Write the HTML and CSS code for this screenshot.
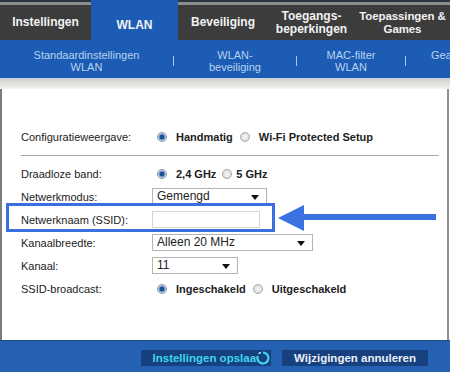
FILE: index.html
```html
<!DOCTYPE html>
<html lang="nl">
<head>
    <meta charset="UTF-8">
    <meta name="viewport" content="width=device-width, initial-scale=1.0">
    <title>WLAN - Standaardinstellingen</title>
    <link rel="stylesheet" href="styles.css">
</head>
<body>

    <div class="tabs">
        <div class="tab w1">Instellingen</div>
        <div class="tab active w2">WLAN</div>
        <div class="tab w3">Beveiliging</div>
        <div class="tab w4">Toegangs-<br>beperkingen</div>
        <div class="tab w5">Toepassingen &amp;<br>Games</div>
    </div>

    <div class="subnav">
        <div class="sub s1">Standaardinstellingen<br>WLAN</div>
        <span class="sep"></span>
        <div class="sub s2">WLAN-<br>beveiliging</div>
        <span class="sep"></span>
        <div class="sub s3">MAC-filter<br>WLAN</div>
        <span class="sep"></span>
        <div class="sub s4">Geavanceerde<br>WLAN</div>
    </div>

    <div class="strip"></div>

    <div class="panel">
        <div class="row">
            <div class="label">Configuratieweergave:</div>
            <div class="ctrl">
                <span class="radio on"></span><b>Handmatig</b>
                <span class="radio gap"></span><b>Wi-Fi Protected Setup</b>
            </div>
        </div>

        <div class="rule"></div>

        <div class="row">
            <div class="label">Draadloze band:</div>
            <div class="ctrl">
                <span class="radio on"></span><b>2,4 GHz</b>
                <span class="radio gap-s"></span><b>5 GHz</b>
            </div>
        </div>
        <div class="row">
            <div class="label">Netwerkmodus:</div>
            <div class="ctrl"><div class="select sel-mode">Gemengd</div></div>
        </div>
        <div class="row ssid">
            <div class="label">Netwerknaam (SSID):</div>
            <div class="ctrl"><div class="input"></div></div>
            <div class="highlight"></div>
        </div>
        <div class="row">
            <div class="label">Kanaalbreedte:</div>
            <div class="ctrl"><div class="select sel-width">Alleen 20 MHz</div></div>
        </div>
        <div class="row">
            <div class="label">Kanaal:</div>
            <div class="ctrl"><div class="select sel-chan">11</div></div>
        </div>
        <div class="row">
            <div class="label">SSID-broadcast:</div>
            <div class="ctrl">
                <span class="radio on"></span><b>Ingeschakeld</b>
                <span class="radio gap"></span><b>Uitgeschakeld</b>
            </div>
        </div>

        <!-- annotation arrow pointing at the SSID field -->
        <svg class="arrow" width="170" height="30" viewBox="0 0 170 30">
            <line x1="22" y1="13" x2="158" y2="13" stroke="#3a72e2" stroke-width="6"/>
            <polygon points="0,14 26,1 26,27" fill="#3a72e2"/>
        </svg>
    </div>

    <div class="footer">
        <div class="btn save">Instellingen opslaa<svg class="spin" width="14" height="14" viewBox="0 0 14 14">
            <path d="M7 1.5 A5.5 5.5 0 1 1 1.8 5" fill="none" stroke="#3fd6f2" stroke-width="2.2"/>
            <path d="M2.5 2.5 A5.5 5.5 0 0 1 5 1.8" fill="none" stroke="#9fe8f8" stroke-width="1.5"/>
        </svg></div>
        <div class="btn">Wijzigingen annuleren</div>
    </div>

</body>
</html>
```

FILE: styles.css
```css
body {
    margin: 0;
    padding: 0;
    width: 450px;
    height: 372px;
    overflow: hidden;
    font-family: 'Liberation Sans', Arial, sans-serif;
    background: #fff;
    color: #222;
}

/* top tabs */
.tabs {
    display: flex;
    height: 40px;
    background: linear-gradient(#2c3440 0 2px, #8d8d8d 2px 5px, #3c3c3c 5px);
    white-space: nowrap;
    overflow: hidden;
}

.tab {
    flex: none;
    display: flex;
    align-items: center;
    justify-content: center;
    padding-top: 5px;
    box-sizing: border-box;
    color: #f2f2f2;
    font-weight: bold;
    font-size: 12px;
    line-height: 13px;
    text-align: center;
}

.tab.active {
    background: #1c5cb4;
    padding-top: 10px;
}

.w1 { width: 91px; }
.w2 { width: 87px; }
.w3 { width: 90px; }
.w4 { width: 87px; }
.w5 { width: 95px; font-size: 11.5px; letter-spacing: -0.1px; }

/* sub navigation */
.subnav {
    display: flex;
    align-items: center;
    height: 38px;
    padding-top: 3px;
    box-sizing: border-box;
    background: #1c5cb4;
    color: #b9d3f0;
    font-size: 11px;
    line-height: 12px;
    white-space: nowrap;
    overflow: hidden;
}

.sub {
    flex: none;
    text-align: center;
}

.s1 { width: 173px; }
.s2 { width: 122px; }
.s3 { width: 108px; }
.s4 { width: 122px; }

.sep {
    flex: none;
    width: 1px;
    height: 10px;
    background: #a9c8ee;
}

.strip {
    height: 10px;
    border-top: 1px solid #c8d4e4;
    background: linear-gradient(#d4d2cc, #e6e5e1 60%, #f6f6f4);
}

/* form panel */
.panel {
    position: relative;
    height: 251px;
    box-sizing: border-box;
    padding-top: 36px;
    border-left: 2px solid #7c7c7c;
    border-right: 2px solid #8e8e8e;
    margin-right: 1px;
}

.row {
    position: relative;
    display: flex;
    align-items: center;
    height: 23px;
    padding-left: 19px;
    font-size: 11px;
}

.label {
    width: 131px;
    flex: none;
}

.ctrl {
    display: flex;
    align-items: center;
}

.ctrl b {
    font-weight: bold;
    margin-left: 9px;
}

.radio {
    flex: none;
    width: 8px;
    height: 8px;
    margin-left: 5px;
    border-radius: 50%;
    border: 1px solid #a8a8a8;
    background: radial-gradient(circle, #fafafa, #cfcfcf);
}

.radio.on {
    border-color: #8a9ab0;
    background: radial-gradient(circle, #1d4f92 0 2px, #8fb0d8 3px, #e4e8ee 4.5px);
}

.radio.gap { margin-left: 7px; }
.radio.gap-s { margin-left: 6px; }
.radio.gap-s + b { margin-left: 4px; }

.rule {
    height: 1px;
    margin: 7px 8px 6px 19px;
    background: #a9a9a9;
}

.select {
    position: relative;
    height: 17px;
    box-sizing: border-box;
    padding-left: 4px;
    border: 1px solid #b4b4b4;
    background: #fff;
    font-size: 12px;
    line-height: 15px;
}

.select::after {
    content: "";
    position: absolute;
    right: 7px;
    top: 6px;
    border-left: 4px solid transparent;
    border-right: 4px solid transparent;
    border-top: 5px solid #111;
}

.sel-mode { width: 115px; }
.sel-width { width: 161px; }
.sel-chan { width: 86px; }

.input {
    width: 108px;
    height: 17px;
    box-sizing: border-box;
    border: 1px solid #d4d4d4;
    background: #fff;
}

.highlight {
    position: absolute;
    left: 4px;
    top: -5px;
    width: 269px;
    height: 29px;
    box-sizing: border-box;
    border: 3px solid #3a6fe0;
}

.arrow {
    position: absolute;
    left: 276px;
    top: 115px;
}

/* footer buttons */
.footer {
    display: flex;
    justify-content: flex-end;
    align-items: center;
    gap: 11px;
    height: 32px;
    padding-right: 22px;
    padding-top: 2px;
    box-sizing: border-box;
    border-top: 1px solid #1a4a8c;
    background: #2461b2;
}

.btn {
    display: flex;
    align-items: center;
    height: 16px;
    padding: 0 12px;
    background: #17417e;
    color: #eaf0fa;
    font-weight: bold;
    font-size: 11.5px;
    white-space: nowrap;
}

.btn.save {
    color: #3fd4f2;
    padding-right: 1px;
}
```
